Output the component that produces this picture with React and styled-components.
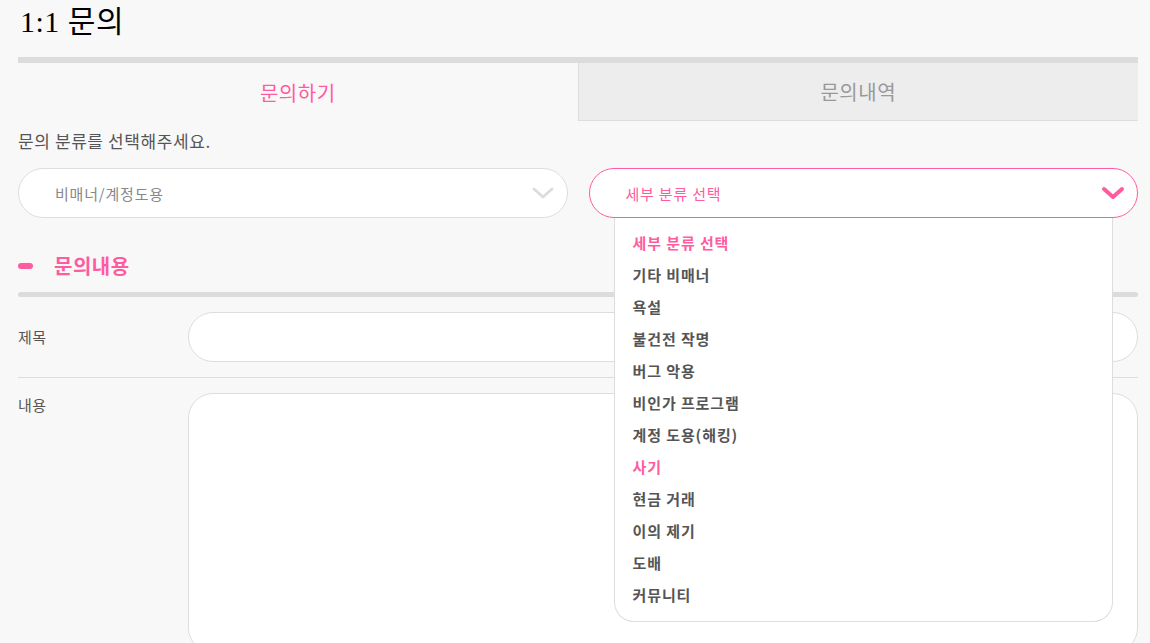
import React from "react";
import styled, { createGlobalStyle } from "styled-components";

const PINK = "#ff5b9f";
const LINE = "#dddddd";

const GlobalStyle = createGlobalStyle`
  html, body {
    margin: 0;
    padding: 0;
    background: #f8f8f8;
    font-family: "Noto Sans CJK KR", "Noto Sans", sans-serif;
    color: #555;
  }
  * { box-sizing: border-box; }
`;

const Page = styled.div`
  padding: 4px 12px 0 18px;
  height: 643px;
  overflow: hidden;
`;

const Title = styled.h1`
  margin: 0 0 17px 2px;
  font-family: "Liberation Serif", "Noto Sans CJK KR", serif;
  font-weight: 400;
  font-size: 30px;
  line-height: 36px;
  letter-spacing: 0.5px;
  color: #000;
`;

const TabBar = styled.div`
  display: flex;
  border-top: 6px solid #dcdcdc;
`;

const Tab = styled.div`
  flex: 1;
  height: 58px;
  display: flex;
  align-items: center;
  justify-content: center;
  font-size: 20px;
  letter-spacing: 0.5px;
  color: ${(p) => (p.$active ? PINK : "#999")};
  background: ${(p) => (p.$active ? "transparent" : "#ededed")};
  border-left: ${(p) => (p.$active ? "none" : `1px solid ${LINE}`)};
  border-bottom: ${(p) => (p.$active ? "none" : `1px solid ${LINE}`)};
`;

const Guide = styled.p`
  margin: 8px 0 0;
  font-size: 17px;
  line-height: 24px;
  letter-spacing: 0.6px;
  color: #555;
`;

const SelectRow = styled.div`
  display: grid;
  grid-template-columns: 1fr 1fr;
  gap: 21px;
  margin-top: 15px;
`;

const SelectWrap = styled.div`
  position: relative;
`;

const SelectBox = styled.div`
  height: 50px;
  border-radius: 25px;
  background: #fff;
  border: 1px solid ${(p) => (p.$open ? PINK : LINE)};
  display: flex;
  align-items: center;
  justify-content: space-between;
  padding: 0 ${(p) => (p.$open ? 12 : 12)}px 0 36px;
  font-size: 15px;
  letter-spacing: 0.8px;
  color: ${(p) => (p.$open ? PINK : "#888")};
`;

const Chevron = ({ color, weight }) => (
  <svg width="24" height="14" viewBox="0 0 24 14">
    <polyline
      points="3,3 12,11 21,3"
      fill="none"
      stroke={color}
      strokeWidth={weight}
      strokeLinecap="round"
      strokeLinejoin="round"
    />
  </svg>
);

const Dropdown = styled.ul`
  position: absolute;
  top: 100%;
  left: 25px;
  right: 25px;
  z-index: 5;
  margin: 0;
  padding: 9px 0 10px;
  list-style: none;
  background: #fff;
  border: 1px solid ${LINE};
  border-top: none;
  border-radius: 0 0 20px 20px;
`;

const Option = styled.li`
  height: 32px;
  line-height: 32px;
  padding-left: 18px;
  font-size: 15px;
  font-weight: 700;
  letter-spacing: 0.9px;
  color: ${(p) => (p.$pink ? PINK : "#555")};
`;

const SectionHead = styled.h2`
  margin: 34px 0 0;
  display: flex;
  align-items: center;
  gap: 21px;
  font-size: 20px;
  line-height: 28px;
  letter-spacing: 0.5px;
  font-weight: 700;
  color: ${PINK};

  &::before {
    content: "";
    width: 15px;
    height: 6px;
    border-radius: 3px;
    background: ${PINK};
  }
`;

const SectionBar = styled.div`
  margin-top: 12px;
  height: 5px;
  border-radius: 3px;
  background: #dcdcdc;
`;

const FormRow = styled.div`
  display: grid;
  grid-template-columns: 170px 1fr;
  align-items: ${(p) => (p.$top ? "start" : "center")};
  padding: 15px 0;
  border-bottom: ${(p) => (p.$last ? "none" : `1px solid ${LINE}`)};
`;

const Label = styled.span`
  font-size: 15px;
  line-height: 24px;
  letter-spacing: 0.5px;
  color: #555;
`;

const TextInput = styled.div`
  height: 50px;
  border-radius: 25px;
  background: #fff;
  border: 1px solid ${LINE};
`;

const TextArea = styled.div`
  height: 260px;
  border-radius: 25px;
  background: #fff;
  border: 1px solid ${LINE};
`;

const options = [
  { label: "세부 분류 선택", pink: true },
  { label: "기타 비매너" },
  { label: "욕설" },
  { label: "불건전 작명" },
  { label: "버그 악용" },
  { label: "비인가 프로그램" },
  { label: "계정 도용(해킹)" },
  { label: "사기", pink: true },
  { label: "현금 거래" },
  { label: "이의 제기" },
  { label: "도배" },
  { label: "커뮤니티" },
];

export default function App() {
  return (
    <>
      <GlobalStyle />
      <Page>
        <Title>1:1 문의</Title>

        <TabBar>
          <Tab $active>문의하기</Tab>
          <Tab>문의내역</Tab>
        </TabBar>

        <Guide>문의 분류를 선택해주세요.</Guide>

        <SelectRow>
          <SelectWrap>
            <SelectBox>
              비매너/계정도용
              <Chevron color="#dcdcdc" weight={3} />
            </SelectBox>
          </SelectWrap>
          <SelectWrap>
            <SelectBox $open>
              세부 분류 선택
              <Chevron color={PINK} weight={4} />
            </SelectBox>
            <Dropdown>
              {options.map((o) => (
                <Option key={o.label} $pink={o.pink}>
                  {o.label}
                </Option>
              ))}
            </Dropdown>
          </SelectWrap>
        </SelectRow>

        <SectionHead>문의내용</SectionHead>
        <SectionBar />

        <FormRow>
          <Label>제목</Label>
          <TextInput />
        </FormRow>
        <FormRow $top $last>
          <Label>내용</Label>
          <TextArea />
        </FormRow>
      </Page>
    </>
  );
}
